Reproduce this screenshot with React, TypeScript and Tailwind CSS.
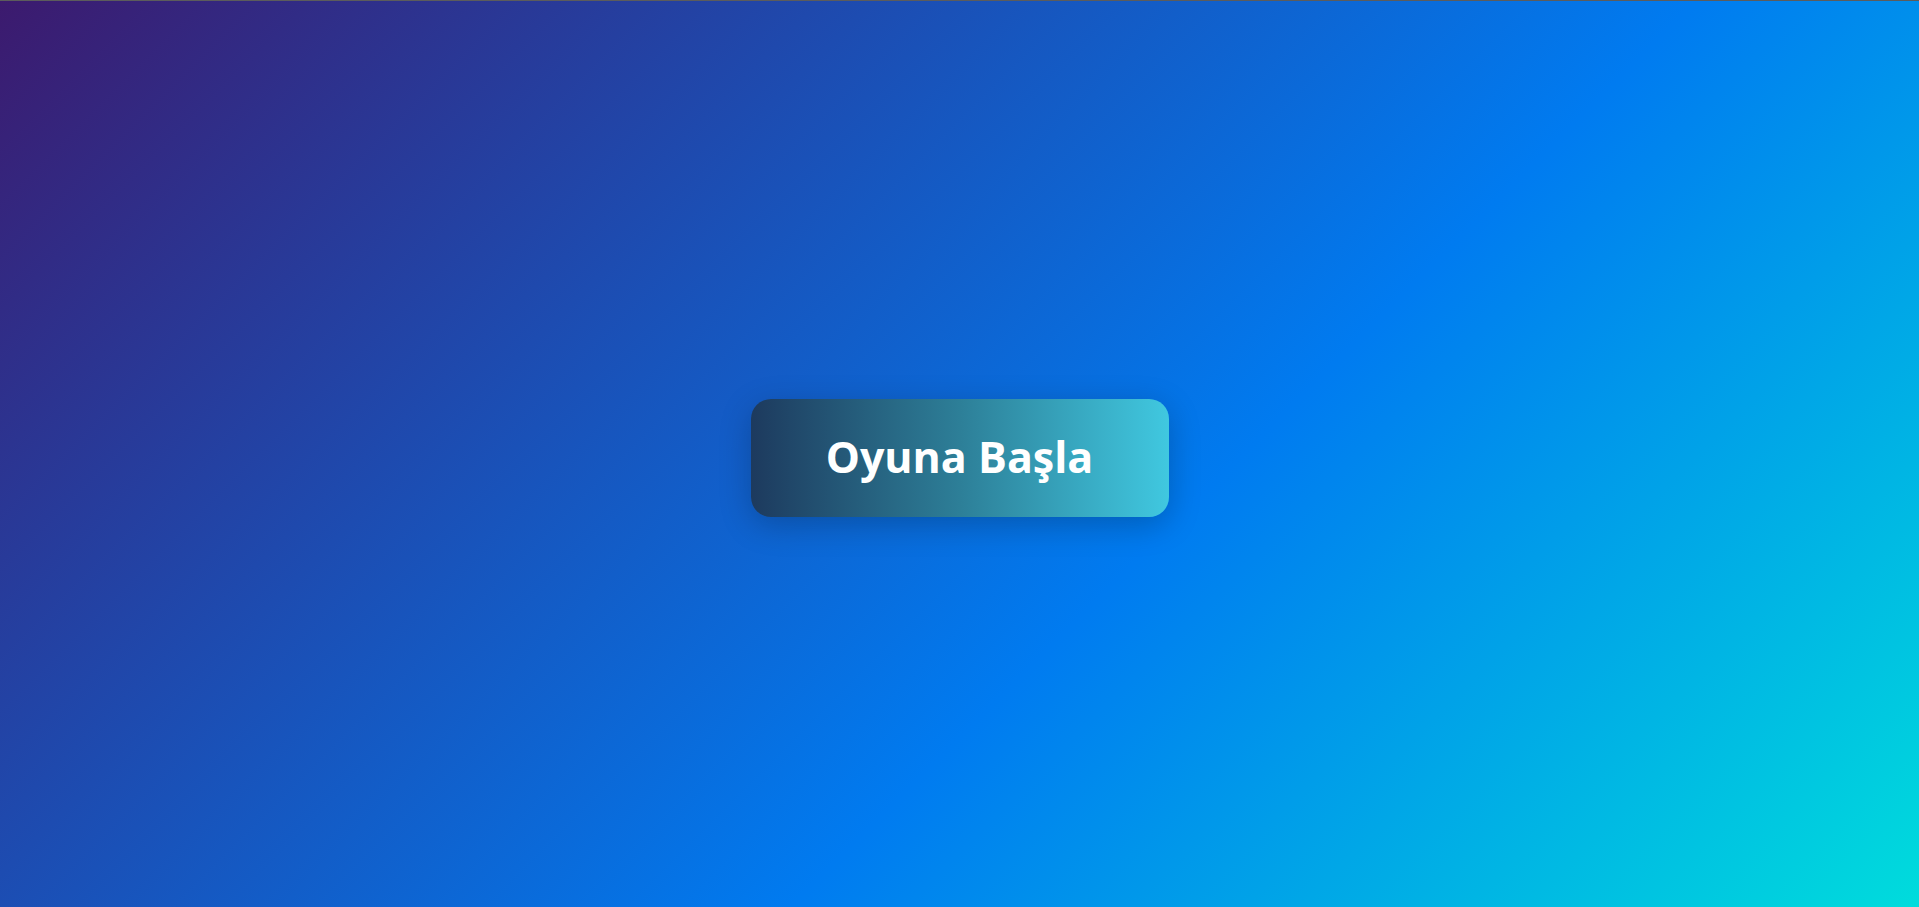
const App = () => {
  return (
    <div className="flex h-[907px] w-full flex-col overflow-hidden">
      {/* thin top rule */}
      <div className="h-px w-full bg-[#5c5c5c]" />
      <main className="flex flex-1 items-center justify-center pt-[7px] bg-[linear-gradient(135deg,#3c1a6e_0%,#007bf0_60%,#00dcdc_100%)]">
        <button className="flex h-[118px] w-[418px] items-center justify-center rounded-[20px] bg-[linear-gradient(90deg,#1d3a5e_0%,#2d7f98_50%,#40c8e0_100%)] font-['Open_Sans',sans-serif] text-[43px] font-bold text-white shadow-[0_8px_32px_rgba(0,0,0,0.22)]">
          Oyuna Başla
        </button>
      </main>
    </div>
  );
};

export default App;
